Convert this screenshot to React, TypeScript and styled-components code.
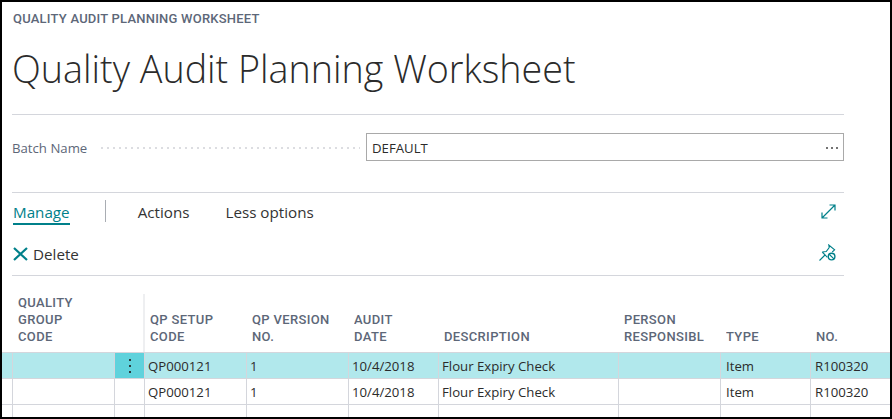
import styled, { createGlobalStyle } from 'styled-components';

const GlobalStyle = createGlobalStyle`
  html, body { margin: 0; padding: 0; background: #fff; }
  body { font-family: "Open Sans", "Liberation Sans", sans-serif; }
`;

const Frame = styled.div`
  box-sizing: border-box;
  width: 892px;
  height: 419px;
  border: 2px solid #000;
  overflow: hidden;
  background: #fff;
`;

const Head = styled.div`
  padding: 0 46px 0 10px;
`;

const Breadcrumb = styled.div`
  height: 17px;
  padding: 8px 0 0 1px;
  font: 500 13px/17px Roboto, sans-serif;
  letter-spacing: 0.22px;
  color: #5d6778;
  text-transform: uppercase;
`;

const Title = styled.h1`
  margin: 0;
  height: 70px;
  padding-top: 17px;
  font: 300 37.7px/50px "Open Sans", sans-serif;
  color: #2b2b2b;
  white-space: nowrap;
`;

const Rule = styled.div`
  height: 1px;
  background: #d4d6dc;
`;

const FieldRow = styled.div`
  display: flex;
  align-items: center;
  height: 28px;
  padding: 18px 0 31px;
`;

const FieldLabel = styled.span`
  margin-top: 2px;
  font-size: 13.2px;
  color: #5d6778;
  white-space: nowrap;
`;

const Leader = styled.span`
  flex: 1;
  height: 2px;
  margin: 2px 6px 0 12px;
  background: radial-gradient(circle, #dcdde1 0.8px, transparent 1px) 0 0 / 6px 2px repeat-x;
`;

const FieldBox = styled.div`
  box-sizing: border-box;
  display: flex;
  align-items: center;
  justify-content: space-between;
  width: 478px;
  height: 28px;
  padding: 2px 5px 0 5px;
  border: 1px solid #a9a9a9;
  font-size: 13.2px;
  color: #2b2b2b;
`;

const Ellipsis = styled.span`
  display: flex;
  gap: 3px;
`;

const EllipsisDot = styled.span`
  width: 2px;
  height: 2px;
  border-radius: 50%;
  background: #444;
`;

const TabRow = styled.div`
  display: flex;
  align-items: flex-start;
  height: 41px;
  padding: 7px 0 0 1px;
`;

const Tab = styled.span<{ $active?: boolean }>`
  height: 23px;
  margin-right: ${p => (p.$active ? 35 : 36)}px;
  font-size: 15.2px;
  line-height: 24px;
  color: ${p => (p.$active ? '#00808a' : '#333')};
  border-bottom: ${p => (p.$active ? '2px solid #00808a' : 'none')};
  white-space: nowrap;
`;

const TabDivider = styled.span`
  width: 1px;
  height: 22px;
  margin-right: 32px;
  background: #a9adb3;
`;

const Spacer = styled.span`
  flex: 1;
`;

const IconSlot = styled.span`
  display: flex;
  margin: 4px 8px 0 0;
`;

const ActionRow = styled.div`
  display: flex;
  align-items: center;
  height: 25px;
  padding-bottom: 9px;
`;

const DeleteButton = styled.span`
  display: flex;
  align-items: center;
  gap: 5px;
  padding-left: 1px;
  font-size: 15.2px;
  color: #333;
`;

const PinSlot = styled.span`
  display: flex;
  margin: -2px 8px 0 0;
`;

const GRID = '10px 102px 30px 102px 102px 90px 180px 102px 90px 80px';

const HeaderGrid = styled.div`
  display: grid;
  grid-template-columns: ${GRID};
  margin-top: 18px;
  height: 58px;
  align-items: end;
`;

const HeadCell = styled.div<{ $divider?: boolean }>`
  box-sizing: border-box;
  height: 58px;
  display: flex;
  align-items: flex-end;
  padding: 0 16px 7px ${p => (p.$divider ? 5 : 6)}px;
  margin-left: ${p => (p.$divider ? '-1px' : 0)};
  border-left: ${p => (p.$divider ? '2px solid #eeeff1' : 'none')};
  font: 500 13px/17px Roboto, sans-serif;
  letter-spacing: 0.35px;
  color: #5d6778;
`;

const HeadText = styled.span`
  display: block;
  width: 100%;
  overflow: hidden;
  white-space: pre;
`;

const Row = styled.div<{ $selected?: boolean }>`
  display: grid;
  grid-template-columns: ${GRID};
  height: 26px;
  box-sizing: border-box;
  border-top: 1px solid #d4d6dc;
  background: ${p => (p.$selected ? '#b1e8ec' : '#fff')};
`;

const Cell = styled.div<{ $first?: boolean; $menu?: boolean; $inset?: number }>`
  box-sizing: border-box;
  padding-left: ${p => p.$inset ?? 3}px;
  border-left: ${p => (p.$first ? 'none' : '1px solid #d4d6dc')};
  background: ${p => (p.$menu ? '#5fd2dc' : 'transparent')};
  font-size: 13.2px;
  line-height: 27px;
  color: #2b2b2b;
  white-space: nowrap;
  overflow: hidden;
  ${p => (p.$menu ? 'display:flex;align-items:center;justify-content:center;padding:0;' : '')}
`;

const headers = [
  '',
  'QUALITY\nGROUP\nCODE',
  '',
  'QP SETUP\nCODE',
  'QP VERSION\nNO.',
  'AUDIT\nDATE',
  'DESCRIPTION',
  'PERSON\nRESPONSIBLE',
  'TYPE',
  'NO.',
];

const rowValues = [
  { text: 'QP000121', inset: 3 },
  { text: '1', inset: 3 },
  { text: '10/4/2018', inset: 3 },
  { text: 'Flour Expiry Check', inset: 3 },
  { text: '', inset: 3 },
  { text: 'Item', inset: 5 },
  { text: 'R100320', inset: 4 },
];

const ExpandIcon = () => (
  <svg width="15" height="15" viewBox="0 0 15 15" fill="none" stroke="#00808a" strokeWidth="1.2">
    <path d="M1 14 14 1M8.5 1H14V6.5M1 8.5V14H6.5" />
  </svg>
);

const PinOffIcon = () => (
  <svg width="17" height="17" viewBox="0 0 17 17" fill="none" stroke="#00808a" strokeWidth="1.1">
    <path d="M.5 16.5 6 11M3.2 8 7.2 7.5 10.2 3.5 9.8 1 15.6 5.8 13.2 8M3.2 8 8.4 13.3" />
    <circle cx="12.6" cy="12.6" r="3.3" strokeWidth="1.4" />
    <path d="M10.3 10.3 14.9 14.9" strokeWidth="1.2" />
  </svg>
);

const CloseIcon = () => (
  <svg width="15" height="14" viewBox="0 0 15 14" fill="none" stroke="#00808a" strokeWidth="2.2">
    <path d="M1 1 14 13M14 1 1 13" />
  </svg>
);

const MenuDots = () => (
  <svg width="4" height="14" viewBox="0 0 4 14" fill="#2b3a3d">
    <rect x="1" y="0" width="2" height="2" />
    <rect x="1" y="6" width="2" height="2" />
    <rect x="1" y="12" width="2" height="2" />
  </svg>
);

const DataRow = ({ selected, empty }: { selected?: boolean; empty?: boolean }) => (
  <Row $selected={selected}>
    <Cell $first />
    <Cell />
    <Cell $menu={selected}>{selected && <MenuDots />}</Cell>
    {rowValues.map((v, i) => (
      <Cell key={i} $inset={v.inset}>
        {empty ? '' : v.text}
      </Cell>
    ))}
  </Row>
);

export default function App() {
  return (
    <>
      <GlobalStyle />
      <Frame>
        <Head>
          <Breadcrumb>Quality Audit Planning Worksheet</Breadcrumb>
          <Title>Quality Audit Planning Worksheet</Title>
          <Rule />
          <FieldRow>
            <FieldLabel>Batch Name</FieldLabel>
            <Leader />
            <FieldBox>
              DEFAULT
              <Ellipsis>
                <EllipsisDot />
                <EllipsisDot />
                <EllipsisDot />
              </Ellipsis>
            </FieldBox>
          </FieldRow>
          <Rule />
          <TabRow>
            <Tab $active>Manage</Tab>
            <TabDivider />
            <Tab>Actions</Tab>
            <Tab>Less options</Tab>
            <Spacer />
            <IconSlot>
              <ExpandIcon />
            </IconSlot>
          </TabRow>
          <ActionRow>
            <DeleteButton>
              <CloseIcon />
              Delete
            </DeleteButton>
            <Spacer />
            <PinSlot>
              <PinOffIcon />
            </PinSlot>
          </ActionRow>
          <Rule />
        </Head>
        <HeaderGrid>
          {headers.map((h, i) => (
            <HeadCell key={i} $divider={i === 3}>
              <HeadText>{h}</HeadText>
            </HeadCell>
          ))}
        </HeaderGrid>
        <DataRow selected />
        <DataRow />
        <DataRow empty />
      </Frame>
    </>
  );
}
